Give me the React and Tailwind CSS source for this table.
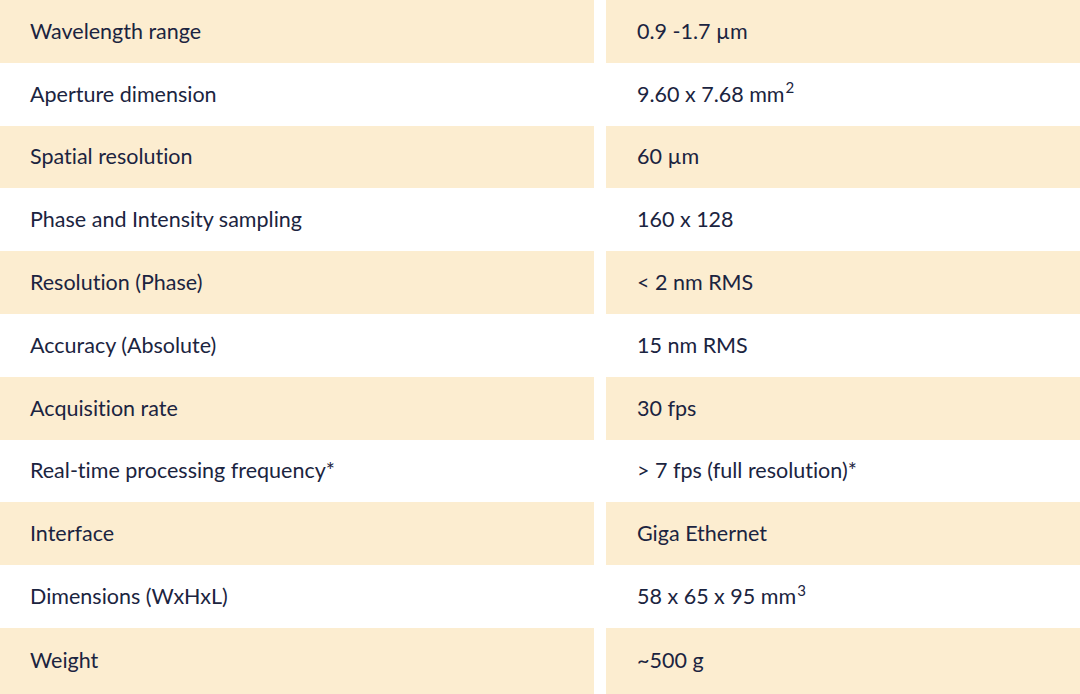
import React from "react";

const Sup = ({ children }) => (
  <span className="relative top-[-0.4em] text-[0.7em] leading-none ml-[1px]">{children}</span>
);

const rows = [
  ["Wavelength range", "0.9 -1.7 µm"],
  ["Aperture dimension", <>9.60 x 7.68 mm<Sup>2</Sup></>],
  ["Spatial resolution", "60 µm"],
  ["Phase and Intensity sampling", "160 x 128"],
  ["Resolution (Phase)", "< 2 nm RMS"],
  ["Accuracy (Absolute)", "15 nm RMS"],
  ["Acquisition rate", "30 fps"],
  ["Real-time processing frequency*", "> 7 fps (full resolution)*"],
  ["Interface", "Giga Ethernet"],
  ["Dimensions (WxHxL)", <>58 x 65 x 95 mm<Sup>3</Sup></>],
  ["Weight", "~500 g"],
];

export default function App() {
  return (
    <div
      className="w-[1080px] h-[694px] bg-white overflow-hidden flex flex-col text-[21.5px] text-[#1b2440] [font-variant-ligatures:none]"
      style={{ fontFamily: "Lato, 'Open Sans', sans-serif" }}
    >
      {rows.map(([k, v], i) => {
        const bg = i % 2 === 0 ? "bg-[#fcedd0]" : "bg-white";
        const last = i === rows.length - 1;
        return (
          <div
            key={i}
            className={`flex gap-[12px] shrink-0 ${last ? "flex-1" : "h-[62.8px]"}`}
          >
            <div className={`w-[594px] flex items-center pl-[30px] pb-[1px] ${bg}`}>{k}</div>
            <div className={`flex-1 flex items-center pl-[31px] pb-[1px] ${bg}`}>{v}</div>
          </div>
        );
      })}
    </div>
  );
}
